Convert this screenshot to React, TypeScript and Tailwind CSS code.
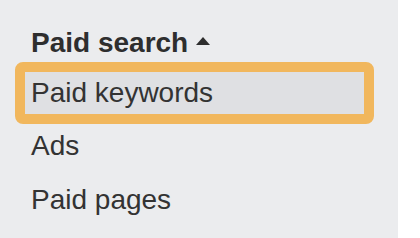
const ITEMS = ['Ads', 'Paid pages']

export default function App() {
  return (
    <div className="w-[420px] h-[238px] bg-white flex font-['Liberation_Sans',Arial,sans-serif] text-[#333]">
      <div className="w-[398px] h-full bg-[#ebecee] pt-[22px]">
        {/* Section header */}
        <div className="flex items-center gap-[8px] pl-[31px] h-[42px] text-[28px] font-bold leading-[42px] text-[#2e2e2e]">
          <span>Paid search</span>
          <svg width="14" height="8" viewBox="0 0 14 8" className="mb-[4px]">
            <path d="M7 0L14 8H0Z" fill="#2e2e2e" />
          </svg>
        </div>

        {/* Selected item */}
        <div className="-mt-[2px] ml-[15px] w-[359px] border-[10px] border-[#f1b75d] rounded-[8px] bg-[#dfe0e3] pl-[6px] h-[62px] text-[28px] leading-[42px]">
          Paid keywords
        </div>

        <div className="mt-[1px] pl-[31px] text-[28px] leading-[42px]">{ITEMS[0]}</div>
        <div className="mt-[12px] pl-[31px] text-[28px] leading-[42px]">{ITEMS[1]}</div>
      </div>
    </div>
  )
}
